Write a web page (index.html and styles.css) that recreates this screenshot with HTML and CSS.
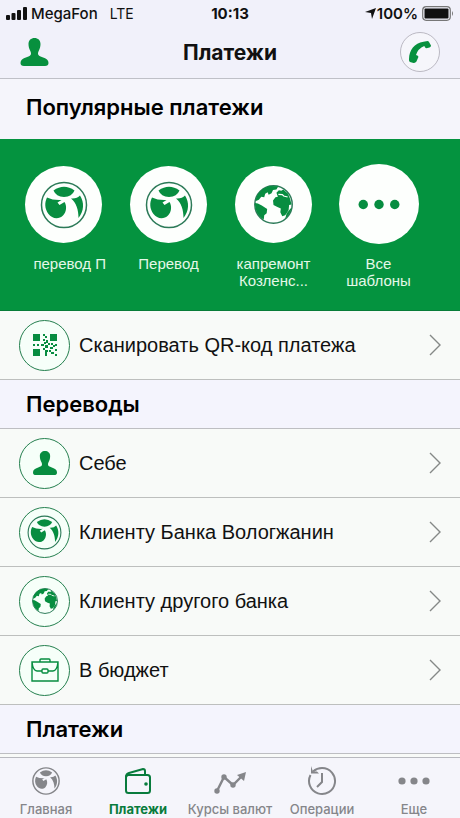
FILE: index.html
```html
<!DOCTYPE html>
<html lang="ru">
<head>
<meta charset="utf-8">
<meta name="viewport" content="width=device-width, initial-scale=1">
<title>Платежи</title>
<link rel="stylesheet" href="styles.css">
</head>
<body>
<svg class="sprite" aria-hidden="true">
  <symbol id="person" viewBox="0 0 28 28">
    <path d="M14 0c3.500 0 6 2.300 6 6 0 2.500-.6 4.600-1.600 6.500-.7 1.300-.9 2-.9 3.300 0 1.600 1.500 2.400 4.500 3.400 4 1.300 6 2.800 6 5.800 0 2-1.200 3-3.500 3h-21C1.200 28 0 27 0 25c0-3 2-4.500 6-5.800 3-1 4.500-1.800 4.500-3.400 0-1.300-.2-2-.9-3.300C8.600 10.600 8 8.500 8 6c0-3.700 2.500-6 6-6z"/>
  </symbol>
  <symbol id="logo" viewBox="0 0 48 48">
    <circle class="ring" cx="24" cy="24" r="22.500"/>
    <path d="M13.500 9.500Q24 2 34.500 9.500Q32 15.500 24 16Q16 15.500 13.500 9.500z"/>
    <path d="M7 16.500Q13 19.500 21.500 19L17.500 21.500L19.500 24L24.500 21C27 25 26.500 31 23 34.500C19 38.500 12 38 8.500 33C4.500 27.500 4.500 21.500 7 16.500z"/>
    <path d="M31 17.500Q37 18 40 14.500C44.500 21.500 44 30 38.500 37C38.500 29 36.500 22 31 17.500z"/>
  </symbol>
  <symbol id="globe" viewBox="0 0 40 40">
    <circle class="ring" cx="20" cy="20" r="19.200"/>
    <path d="M2 14C4 7 10 2 17 1L25 1.200L23 4.500L19.500 5L18 8.500L15 10L14 7.500L11.500 9L10.500 12.500L7.500 12L5 15L2 16.500z"/>
    <path d="M1 18.500L4 19L8 21L13.500 24.500L13 29L10.500 31L10 35.500C4 32 1 26 1 18.500z"/>
    <path d="M23 8L25.500 5.500L28 6L30 4.500L35 9L37 14L38.500 20L36 20.500L35.500 26L32 31L29 32L27 28L27.500 24L24 22.500L20 20.500L19.500 16L22 12.500L24.500 12z"/>
    <path d="M37.500 24L38.500 23.500Q37 30 32 34.500L33.500 29z"/>
    <path d="M25 9.500l4 .3 1.500 1.500 4 1" fill="none" stroke="#fff" stroke-width="1.300"/>
  </symbol>
  <symbol id="chevron" viewBox="0 0 12 22">
    <path d="M1 1l10 10L1 21" fill="none" stroke="currentColor" stroke-width="1.400"/>
  </symbol>
  <symbol id="dots" viewBox="0 0 40 10">
    <circle cx="5" cy="5" r="4.500"/><circle cx="20" cy="5" r="4.500"/><circle cx="35" cy="5" r="4.500"/>
  </symbol>
</svg>

<div class="status">
  <div class="status-left">
    <svg class="signal" viewBox="0 0 21 13"><rect y="8" width="4" height="5" rx="1"/><rect x="5.500" y="6" width="4" height="7" rx="1"/><rect x="11" y="3" width="4" height="10" rx="1"/><rect x="17" width="4" height="13" rx="1"/></svg>
    <span>MegaFon</span><span class="network">LTE</span>
  </div>
  <time class="clock">10:13</time>
  <div class="status-right">
    <svg class="arrow" viewBox="0 0 11 11"><path d="M11 0L7 11L6 5L0 4z"/></svg>
    <span>100%</span>
    <svg class="battery" viewBox="0 0 32 15"><rect x=".7" y=".7" width="27.600" height="13.600" rx="3.500" fill="none" stroke="#777" stroke-width="1.200"/><rect x="2.500" y="2.500" width="24" height="10" rx="1"/><path d="M30 5q2 2.500 0 5z" fill="#777"/></svg>
  </div>
</div>

<header class="navbar">
  <button class="profile" aria-label="Профиль"><svg><use href="#person"/></svg></button>
  <h1>Платежи</h1>
  <button class="call" aria-label="Позвонить"><svg viewBox="0 0 22 22"><path d="M14.500.8L18.500 0q1 0 1.500 1l2 3.500q0 1.500-1.500 2l-3 .7q-1 0-1.500-1l-.7-1.200Q9 7.500 7 14l1.800.8q.7.500.5 1.500l-2 4.500Q6 22 4.500 22L1 21Q0 20.500 0 19C-.2 9.500 5 2.500 14.500.8z"/></svg></button>
</header>

<main>
  <h2 class="section first">Популярные платежи</h2>
  <nav class="templates" aria-label="Шаблоны">
    <a href="#t1"><span class="disc"><svg class="mark"><use href="#logo"/></svg></span><span class="label">&nbsp;&nbsp;&nbsp;перевод П</span></a>
    <a href="#t2"><span class="disc"><svg class="mark"><use href="#logo"/></svg></span><span class="label">Перевод</span></a>
    <a href="#t3"><span class="disc"><svg class="earth"><use href="#globe"/></svg></span><span class="label">капремонт Козленс...</span></a>
    <a href="#all"><span class="disc large"><svg class="more"><use href="#dots"/></svg></span><span class="label">Все шаблоны</span></a>
  </nav>
  <a class="row" href="#qr">
    <span class="badge"><svg class="qr" viewBox="0 0 24 22"><path d="M0 0h7v7H0zM17 0h7v7h-7zM0 15h7v7H0zM10 0h2v2h-2zM12 2h2v2h-2zM10 5h2v2h-2zM13 6h2v3h-2zM0 10h2v2H0zM4 10h2v2H4zM8 10h3v2H8zM11 8h2v2h-2zM12 11h3v3h-3zM15 9h2v2h-2zM18 9h2v2h-2zM22 10h2v2h-2zM17 13h3v2h-3zM20 11h2v2h-2zM10 14h2v2h-2zM12 16h3v2h-3zM12 18h2v4h-2zM16 16h2v2h-2zM18 18h3v2h-3zM22 15h2v2h-2zM22 20h2v2h-2z"/></svg></span>
    <span class="title">Сканировать QR-код платежа</span><svg class="chevron"><use href="#chevron"/></svg>
  </a>
  <h2 class="section">Переводы</h2>
  <a class="row" href="#self"><span class="badge"><svg class="self"><use href="#person"/></svg></span><span class="title">Себе</span><svg class="chevron"><use href="#chevron"/></svg></a>
  <a class="row" href="#client"><span class="badge"><svg class="bank"><use href="#logo"/></svg></span><span class="title">Клиенту Банка Вологжанин</span><svg class="chevron"><use href="#chevron"/></svg></a>
  <a class="row" href="#other"><span class="badge"><svg class="world"><use href="#globe"/></svg></span><span class="title">Клиенту другого банка</span><svg class="chevron"><use href="#chevron"/></svg></a>
  <a class="row" href="#budget">
    <span class="badge"><svg class="case" viewBox="0 0 28 24"><g fill="none" stroke="currentColor" stroke-width="1.400"><path d="M1 4h26v19H1zM9 4V2q0-1 1-1h8q1 0 1 1v2M1 4q1 9 5 9h5M27 4q-1 9-5 9h-5"/><rect x="11" y="11" width="6" height="4" rx="1"/></g></svg></span>
    <span class="title">В бюджет</span><svg class="chevron"><use href="#chevron"/></svg>
  </a>
  <h2 class="section">Платежи</h2>
</main>

<nav class="tabs" aria-label="Разделы">
  <a href="#home"><svg class="tab-icon"><use href="#logo"/></svg><span>Главная</span></a>
  <a href="#pay" class="active" aria-current="page"><svg class="tab-icon" viewBox="0 0 28 28"><g fill="none" stroke="currentColor" stroke-width="2"><rect x="2" y="8" width="24" height="18" rx="2.500"/><path d="M2 10q0-3 3-4l14-4q2 0 2 2v4"/></g><circle cx="22" cy="17" r="1.800"/></svg><span>Платежи</span></a>
  <a href="#rates"><svg class="tab-icon wide" viewBox="0 0 32 28"><path d="M3 24L10 10L19 18L28 9" fill="none" stroke="currentColor" stroke-width="2.400"/><circle cx="3" cy="24" r="2.700"/><circle cx="10" cy="10" r="2.700"/><circle cx="19" cy="18" r="2.700"/><path d="M32 5l-2 9-7-6z"/></svg><span>Курсы валют</span></a>
  <a href="#history"><svg class="tab-icon wide" viewBox="0 0 30 30"><path d="M3.500 9A13 13 0 1 0 15 2Q10 2 6 5.500M15 7v9l-5 5" fill="none" stroke="currentColor" stroke-width="2"/><path d="M4 0v7.500h8L10 5.500H6z"/></svg><span>Операции</span></a>
  <a href="#more"><svg class="tab-icon wide"><use href="#dots"/></svg><span>Еще</span></a>
</nav>
</body>
</html>
```
FILE: styles.css
```css
* { box-sizing: border-box; }
body { margin: 0; height: 100vh; display: flex; flex-direction: column; overflow: hidden; background: #f1f1fa; color: #111; font-family: Inter, "Liberation Sans", sans-serif; }
svg { display: block; fill: currentColor; }
a { color: inherit; text-decoration: none; }
button { padding: 0; border: 0; background: none; color: #07903e; }
.sprite { position: absolute; width: 0; height: 0; }
.ring { fill: none; stroke: var(--ring, #2c7a58); stroke-width: var(--ring-width, 1.5); }
.status { flex: none; height: 26px; padding: 0 6px; display: grid; grid-template-columns: 1fr auto 1fr; align-items: center; font-size: 15px; font-weight: 500; }
.status-left, .status-right { display: flex; align-items: center; gap: 4px; }
.status-right { justify-content: flex-end; gap: 1px; font-weight: 600; }
.network { margin-left: 8px; font-size: 14px; font-weight: 400; }
.clock { font-weight: 700; }
.signal { width: 21px; height: 13px; }
.arrow { width: 11px; height: 11px; }
.battery { width: 32px; height: 15px; margin-left: 3px; }
.navbar { flex: none; height: 53px; padding: 0 20px; display: grid; grid-template-columns: 1fr auto 1fr; align-items: center; border-bottom: 1px solid #bfc0c7; }
h1 { margin: 0; font-size: 21px; font-weight: 700; }
.profile { width: 29px; height: 28px; }
.profile svg { width: 100%; height: 100%; }
.call { width: 40px; height: 40px; justify-self: end; display: grid; place-items: center; border: 1px solid #bbb9c3; border-radius: 50%; background: #f6f6fb; }
.call svg { width: 22px; height: 22px; }
main { flex: 1; min-height: 0; overflow: hidden; background: #f8faf8; }
.section { margin: 0; height: 49px; padding: 0 26px; display: flex; align-items: center; background: #f4f4fd; border-bottom: 1px solid #bdbec2; color: #000; font-size: 22px; font-weight: 600; }
.first { height: 60px; padding-bottom: 4px; border: 0; background: #f5f5fb; }
.templates { height: 172px; padding: 25px 29px 0 11px; display: grid; grid-template-columns: repeat(4, 1fr); background: #04933f; border-bottom: 1px solid #087c39; color: #e5f8e8; font: 15px/17px "Liberation Sans", sans-serif; text-align: center; }
.templates a { display: flex; flex-direction: column; align-items: center; gap: 11px; }
.disc { width: 77px; height: 77px; margin: 2px 0 1px; display: grid; place-items: center; border-radius: 50%; background: #fdfffd; color: #078d40; }
.disc.large { width: 80px; height: 80px; margin: 0; }
.label { width: 90px; }
.mark { width: 48px; height: 48px; }
.earth { width: 39px; height: 39px; }
.more { width: 42px; height: 11px; }
.row { height: 69px; padding: 0 19px; display: flex; align-items: center; gap: 9px; border-bottom: 1px solid #bdbfbe; font: 20px "Liberation Sans", sans-serif; }
.badge { flex: none; width: 51px; height: 51px; display: grid; place-items: center; border: 1px solid #25804f; border-radius: 50%; background: #f6fff9; color: #078d40; }
.title { flex: 1; }
.chevron { width: 12px; height: 22px; color: #858887; }
.qr { width: 24px; height: 22px; }
.self { width: 24px; height: 24px; }
.bank { width: 35px; height: 35px; }
.world { width: 26px; height: 26px; }
.case { width: 28px; height: 24px; }
.tabs { --ring: currentColor; --ring-width: 2.5; flex: none; height: 61px; display: grid; grid-template-columns: repeat(5, 1fr); border-top: 1px solid #b8b9bf; background: #f5f5fb; color: #85868a; font-size: 13px; font-weight: 500; text-align: center; white-space: nowrap; }
.tabs a { display: flex; flex-direction: column; align-items: center; padding-top: 8px; }
.tab-icon { width: 28px; height: 30px; }
.tab-icon.wide { width: 32px; }
.tabs span { margin-top: 6px; line-height: 15px; }
.tabs .active { color: #087b3c; font-weight: 700; }
```
